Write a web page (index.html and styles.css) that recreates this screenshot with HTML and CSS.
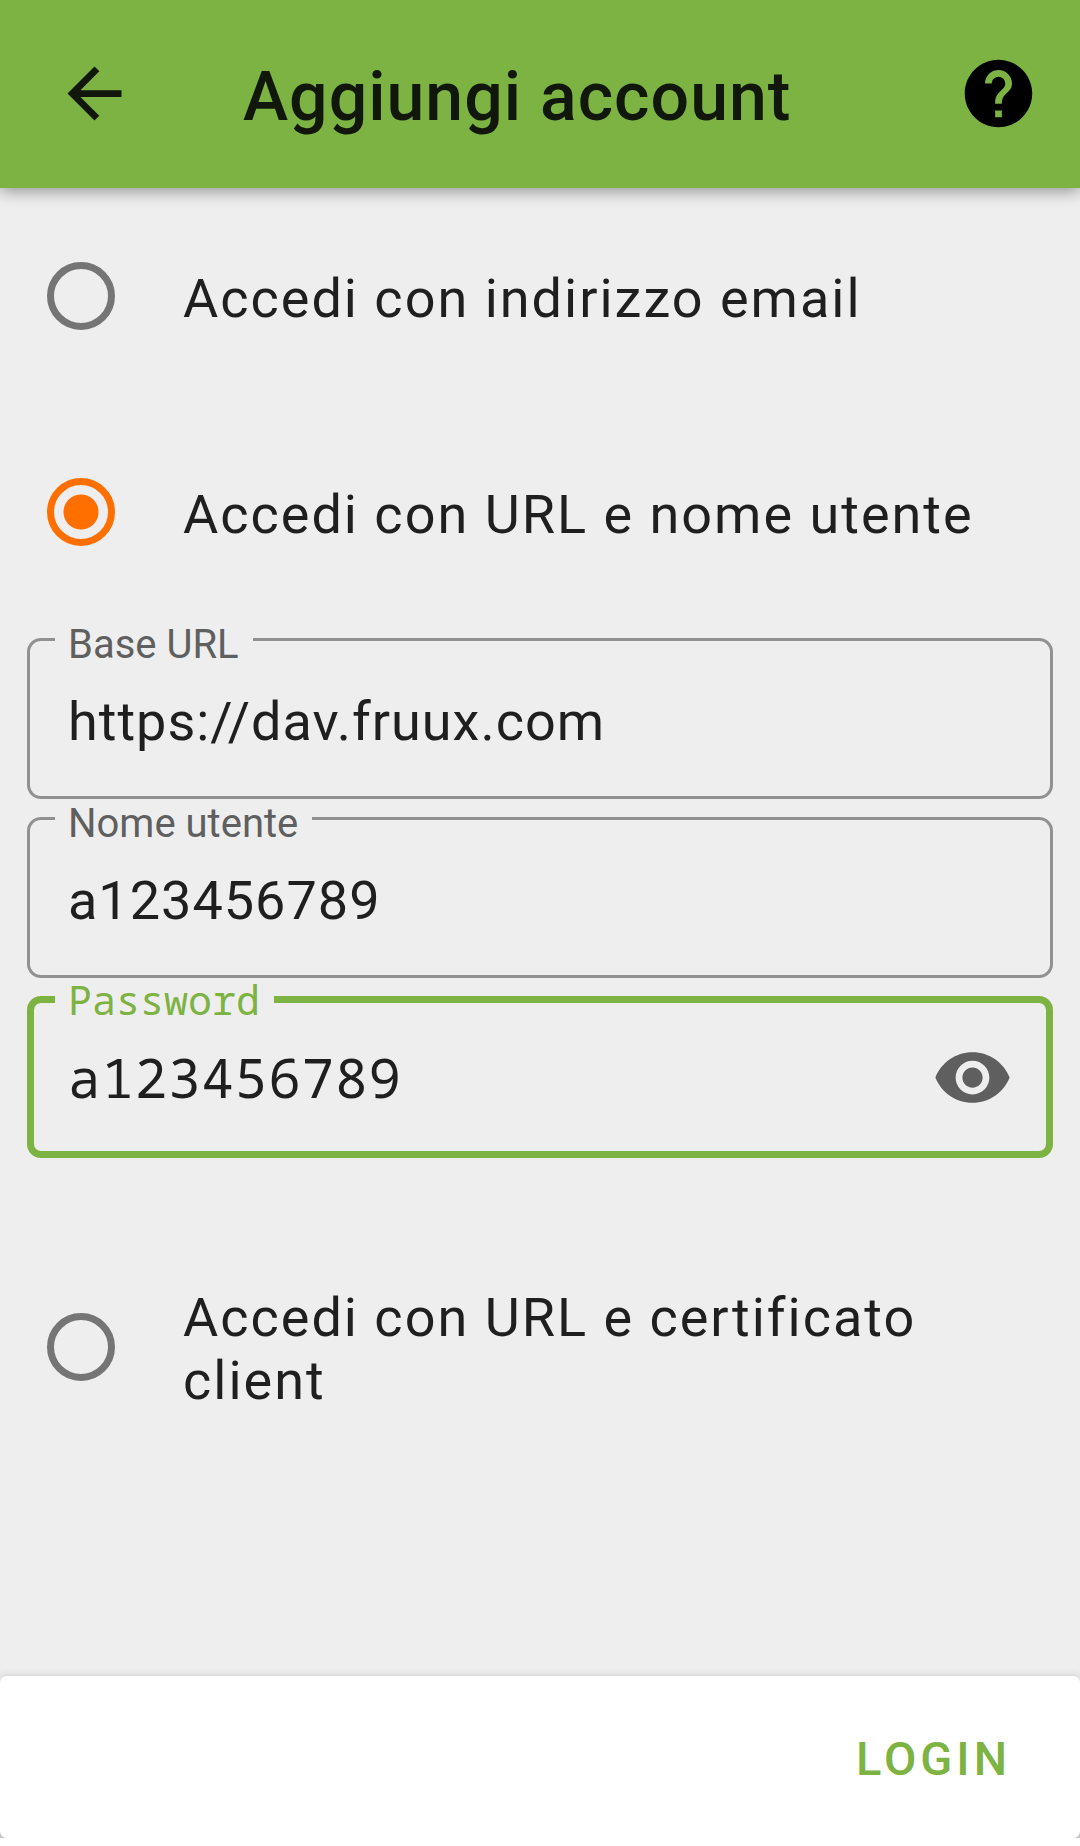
FILE: index.html
```html
<!DOCTYPE html>
<html lang="it">
<head>
<meta charset="utf-8">
<meta name="viewport" content="width=device-width, initial-scale=1">
<title>Aggiungi account</title>
<link rel="stylesheet" href="styles.css">
</head>
<body>
<header class="app-bar">
  <button class="icon-button" type="button" aria-label="Indietro">
    <svg class="icon icon-back" viewBox="0 0 24 24" aria-hidden="true"><path d="M20 11H7.83l5.59-5.59L12 4l-8 8 8 8 1.41-1.41L7.83 13H20z"/></svg>
  </button>
  <h1 class="title">Aggiungi account</h1>
  <button class="icon-button" type="button" aria-label="Aiuto">
    <svg class="icon" viewBox="0 0 24 24" aria-hidden="true"><path d="M12 2C6.48 2 2 6.48 2 12s4.48 10 10 10 10-4.48 10-10S17.52 2 12 2zm1 17h-2v-2h2v2zm2.07-7.75l-.9.92C13.45 12.9 13 13.5 13 15h-2v-.5c0-1.1.45-2.1 1.17-2.83l1.24-1.26c.37-.36.59-.86.59-1.41 0-1.1-.9-2-2-2s-2 .9-2 2H8c0-2.21 1.79-4 4-4s4 1.79 4 4c0 .88-.36 1.68-.93 2.25z"/></svg>
  </button>
</header>

<form class="login" id="login">
  <label class="option">
    <input class="radio" type="radio" name="method" value="email">
    <span class="option-text">Accedi con indirizzo email</span>
  </label>
  <label class="option">
    <input class="radio" type="radio" name="method" value="url" checked>
    <span class="option-text">Accedi con URL e nome utente</span>
  </label>

  <div class="fields">
    <fieldset class="field">
      <legend class="legend"><label for="base-url">Base URL</label></legend>
      <div class="field-row">
        <input class="value" id="base-url" type="text" value="https://dav.fruux.com" spellcheck="false">
      </div>
    </fieldset>
    <fieldset class="field">
      <legend class="legend"><label for="username">Nome utente</label></legend>
      <div class="field-row">
        <input class="value" id="username" type="text" value="a123456789" spellcheck="false">
      </div>
    </fieldset>
    <fieldset class="field field-active">
      <legend class="legend"><label for="password">Password</label></legend>
      <div class="field-row">
        <input class="value" id="password" type="text" value="a123456789" spellcheck="false">
        <button class="icon-button" type="button" aria-label="Nascondi password">
          <svg class="icon icon-eye" viewBox="0 0 24 24" aria-hidden="true"><path d="M12 4.5C7 4.5 2.73 7.61 1 12c1.73 4.39 6 7.5 11 7.5s9.27-3.11 11-7.5c-1.73-4.39-6-7.5-11-7.5zM12 17c-2.76 0-5-2.24-5-5s2.24-5 5-5 5 2.24 5 5-2.24 5-5 5zm0-8c-1.66 0-3 1.34-3 3s1.34 3 3 3 3-1.34 3-3-1.34-3-3-3z"/></svg>
        </button>
      </div>
    </fieldset>
  </div>

  <label class="option">
    <input class="radio" type="radio" name="method" value="certificate">
    <span class="option-text">Accedi con URL e certificato client</span>
  </label>
</form>

<footer class="footer">
  <div class="actions">
    <button class="submit" type="submit" form="login">LOGIN</button>
  </div>
</footer>
</body>
</html>
```

FILE: styles.css
```css
:root {
  --green: #7cb342;
  --orange: #ff6f00;
  --surface: #eeeeee;
  --text: #1f1f1f;
  --hint: #5f5f5f;
}

* {
  box-sizing: border-box;
}

body {
  display: flex;
  flex-direction: column;
  min-height: 100vh;
  margin: 0;
  background: var(--surface);
  color: var(--text);
  font-family: Roboto, "Noto Sans", sans-serif;
  font-size: 54px;
  line-height: 63px;
}

.app-bar {
  display: flex;
  align-items: center;
  height: 188px;
  padding: 0 41px 2px 54px;
  background: var(--green);
  box-shadow: 0 4px 14px rgba(0, 0, 0, 0.35);
}

.title {
  flex: 1;
  margin: 0;
  padding: 8px 0 0 108px;
  color: #11170a;
  font-size: 68px;
  font-weight: 500;
  line-height: 80px;
  letter-spacing: 1px;
}

.icon-button {
  display: flex;
  padding: 0;
  border: 0;
  background: none;
}

.icon {
  width: 81px;
  height: 81px;
  fill: #000000;
}

.icon-back {
  fill: #11170a;
}

.icon-eye {
  fill: var(--hint);
}

.login {
  display: flex;
  flex: 1;
  flex-direction: column;
  padding: 27px;
}

.option {
  display: flex;
  align-items: center;
  gap: 68px;
  min-height: 162px;
  margin-bottom: 54px;
  padding: 0 20px;
  letter-spacing: 2px;
}

.option-text {
  padding-top: 4px;
}

.radio {
  flex: none;
  width: 68px;
  height: 68px;
  margin: 0;
  border: 7px solid #757575;
  border-radius: 50%;
  appearance: none;
}

.radio:checked {
  border-color: var(--orange);
  background: radial-gradient(circle, var(--orange) 17px, transparent 18px);
}

.fields {
  display: grid;
  gap: 2px;
  margin: -25px 0 108px;
}

.field {
  min-width: 0;
  margin: 0;
  padding: 0;
  border: 3px solid #919191;
  border-radius: 14px;
}

.legend {
  margin-left: 25px;
  padding: 11px 14px 0 13px;
  color: var(--hint);
  font-size: 40px;
  line-height: 24px;
}

.field-row {
  display: flex;
  align-items: center;
  height: 139px;
  padding: 0 33px 10px 38px;
}

.value {
  flex: 1;
  min-width: 0;
  padding: 0;
  border: 0;
  outline: 0;
  background: none;
  color: inherit;
  font: inherit;
  letter-spacing: 1px;
}

.field-active {
  border: 7px solid var(--green);
  font-family: "Noto Sans Mono", "DejaVu Sans Mono", monospace;
}

.field-active .legend {
  margin-left: 21px;
  padding-top: 8px;
  padding-bottom: 7px;
  color: var(--green);
}

.field-active .field-row {
  height: 132px;
  padding-bottom: 16px;
  padding-left: 34px;
}

.footer {
  border-bottom: 8px solid #ffffff;
  background: linear-gradient(#e4e4e4, #c8c8c8);
  box-shadow: 0 0 8px rgba(0, 0, 0, 0.15);
}

.actions {
  display: flex;
  align-items: center;
  justify-content: flex-end;
  min-height: 162px;
  padding: 2px 69px 0;
  border-radius: 7px;
  background: #ffffff;
}

.submit {
  padding: 0;
  border: 0;
  background: none;
  color: var(--green);
  font: inherit;
  font-size: 47px;
  font-weight: 500;
  letter-spacing: 4px;
}
```
